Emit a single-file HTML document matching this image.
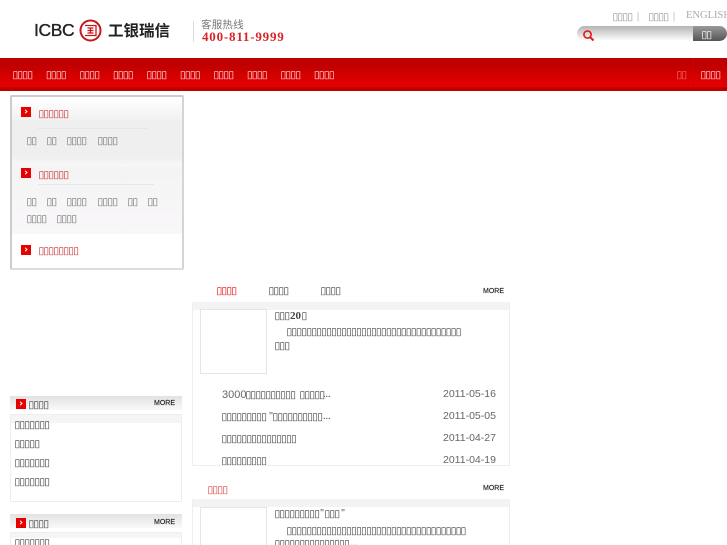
<!DOCTYPE html>
<html lang="zh"><head><meta charset="utf-8"><title>ICBC</title>
<style>
html,body{margin:0;padding:0;background:#fff;width:727px;height:545px;overflow:hidden}
#w{position:absolute;left:0;top:0;width:727px;height:545px;overflow:hidden;font-family:"Liberation Serif",serif;font-size:12px;color:#333}
.t{position:absolute;white-space:nowrap;line-height:14px;font-family:"Liberation Serif",serif;font-size:10px}
.b{position:absolute;white-space:nowrap;line-height:14px;margin-left:-.7px;font-family:"DejaVu Sans",sans-serif;font-size:10.5px;letter-spacing:-.8px;color:#444}
.nav{color:#fdd;top:68px}
.sub{color:#777}
.red{color:#c33}
.more{font:7px/10px "Liberation Sans",sans-serif;color:#222;position:absolute;-webkit-text-stroke:.15px #222}
.ic{position:absolute;width:10px;height:10px;background:#e60000}
.ic:after{content:"";position:absolute;left:3px;top:3px;width:2px;height:2px;border:solid #fff;border-width:1px 1px 0 0;transform:rotate(45deg)}
.h{position:absolute;background:linear-gradient(#e2e2e2,#f9f9f9)}
.d{position:absolute;left:443px;font:10.5px/14px "Liberation Sans",sans-serif;color:#666;white-space:nowrap}
</style></head><body><div id="w">
<div class="t" style="left:34px;top:19px;font:400 17.5px/22px 'Liberation Sans',sans-serif;color:#222;letter-spacing:-.4px;-webkit-text-stroke:.35px #222">ICBC</div>
<svg style="position:absolute;left:79px;top:19px" width="23" height="23" viewBox="0 0 23 23" fill="none" stroke="#c8161d"><circle cx="11.5" cy="11.5" r="10" stroke-width="2"/><path d="M6 6.500H17V16.500H6M8.500 9H14.500M8.500 14H14.500M11.500 9V14M8.500 11.500H14.500" stroke-width="1.300"/></svg>
<div class="t" style="left:108px;top:20px;font:700 15.500px/20px 'Noto Sans CJK SC',sans-serif;color:#222">工银瑞信</div>
<div style="position:absolute;left:193px;top:21px;width:1px;height:21px;background:#ddd"></div>
<div class="t" style="left:201px;top:18px;font:10.500px/14px 'Noto Sans CJK SC',sans-serif;color:#777;letter-spacing:.2px">客服热线</div>
<div class="t" style="left:202px;top:30px;font:700 13px/14px 'Liberation Serif',serif;color:#d8232a;letter-spacing:.8px">400-811-9999</div>

<div class="b" style="left:613px;top:10px;color:#999">▯▯▯▯</div><div class="t" style="left:637px;top:10px;color:#999">|</div>
<div class="b" style="left:649px;top:10px;color:#999">▯▯▯▯</div><div class="t" style="left:673px;top:10px;color:#999">|</div>
<div class="t" style="left:686px;top:9px;font-size:10.500px;color:#aaa">ENGLISH</div>
<div style="position:absolute;left:577px;top:26px;width:120px;height:15px;border-radius:8px 0 0 8px;background:linear-gradient(#b4b4b4,#fff)"></div>
<svg style="position:absolute;left:582px;top:29px" width="13" height="13" viewBox="0 0 13 13" fill="none" stroke="#e01b1b"><circle cx="5.500" cy="5.500" r="3.600" stroke-width="1.600"/><path d="M8.200 8.200L11.500 11.500" stroke-width="2"/></svg>
<div style="position:absolute;left:693px;top:26px;width:34px;height:15px;border-radius:0 8px 8px 0;background:linear-gradient(#9a9a9a,#555)"></div>
<div class="b" style="left:702px;top:28px;color:#fff">▯▯</div>

<div style="position:absolute;left:0;top:58px;width:727px;height:33px;background:linear-gradient(#b90000 0,#c00000 20%,#e60000 85%,#e60000 88%,#b80000 90%,#c40000 100%)"></div>
<div class="b nav" style="left:13px">▯▯▯▯</div>
<div class="b nav" style="left:46.500px">▯▯▯▯</div>
<div class="b nav" style="left:80px">▯▯▯▯</div>
<div class="b nav" style="left:113.500px">▯▯▯▯</div>
<div class="b nav" style="left:147px">▯▯▯▯</div>
<div class="b nav" style="left:180.500px">▯▯▯▯</div>
<div class="b nav" style="left:214px">▯▯▯▯</div>
<div class="b nav" style="left:247.500px">▯▯▯▯</div>
<div class="b nav" style="left:281px">▯▯▯▯</div>
<div class="b nav" style="left:314.500px">▯▯▯▯</div>
<div class="b nav" style="left:677px;color:#ff6a6a">▯▯</div>
<div style="position:absolute;left:693px;top:58px;width:1px;height:30px;background:#d40000"></div>
<div class="b nav" style="left:701px">▯▯▯▯</div>

<!-- left menu -->
<div style="position:absolute;left:10px;top:95px;width:170px;height:171px;border:2px solid #ccc;border-bottom-color:#ddd;border-right-color:#d5d5d5;background:#fff;border-radius:2px"></div>
<div style="position:absolute;left:12px;top:97px;width:170px;height:23px;background:linear-gradient(#fff,#f2f2f2)"></div>
<div style="position:absolute;left:12px;top:120px;width:170px;height:36px;background:#efefef"></div>
<div style="position:absolute;left:12px;top:156px;width:170px;height:10px;background:linear-gradient(#efefef,#f7f7f7)"></div>
<div style="position:absolute;left:12px;top:166px;width:170px;height:68px;background:linear-gradient(#f4f4f4,#f9f7f9)"></div>
<div style="position:absolute;left:38px;top:128px;width:110px;height:1px;background:#e6e6e6"></div>
<div style="position:absolute;left:38px;top:184px;width:116px;height:1px;background:#e6e6e6"></div>
<div class="ic" style="left:21px;top:107px"></div>
<div class="b red" style="left:39px;top:107px">▯▯▯▯▯▯</div>
<div class="b sub" style="left:27px;top:134px">▯▯</div>
<div class="b sub" style="left:47px;top:134px">▯▯</div>
<div class="b sub" style="left:67px;top:134px">▯▯▯▯</div>
<div class="b sub" style="left:98px;top:134px">▯▯▯▯</div>
<div class="ic" style="left:21px;top:168px"></div>
<div class="b red" style="left:39px;top:168px">▯▯▯▯▯▯</div>
<div class="b sub" style="left:27px;top:195px">▯▯</div>
<div class="b sub" style="left:47px;top:195px">▯▯</div>
<div class="b sub" style="left:67px;top:195px">▯▯▯▯</div>
<div class="b sub" style="left:98px;top:195px">▯▯▯▯</div>
<div class="b sub" style="left:128px;top:195px">▯▯</div>
<div class="b sub" style="left:148px;top:195px">▯▯</div>
<div class="b sub" style="left:27px;top:212px">▯▯▯▯</div>
<div class="b sub" style="left:57px;top:212px">▯▯▯▯</div>
<div class="ic" style="left:21px;top:245px"></div>
<div class="b red" style="left:39px;top:244px">▯▯▯▯▯▯▯▯</div>

<!-- left section 1 -->
<div class="h" style="left:10px;top:396px;width:172px;height:14px"></div>
<div class="ic" style="left:16px;top:399px"></div>
<div class="b" style="left:29px;top:398px">▯▯▯▯</div>
<div class="more" style="left:154px;top:399px">MORE</div>
<div style="position:absolute;left:10px;top:414px;width:170px;height:86px;border:1px solid #eee;background:linear-gradient(#f5f5f5 0,#f5f5f5 8px,#fff 8px)"></div>
<div class="b" style="left:15px;top:418px">▯▯▯▯▯▯▯</div>
<div class="b" style="left:15px;top:437px">▯▯▯▯▯</div>
<div class="b" style="left:15px;top:456px">▯▯▯▯▯▯▯</div>
<div class="b" style="left:15px;top:475px">▯▯▯▯▯▯▯</div>

<!-- left section 2 -->
<div class="h" style="left:10px;top:514px;width:172px;height:14px"></div>
<div class="ic" style="left:16px;top:518px"></div>
<div class="b" style="left:29px;top:517px">▯▯▯▯</div>
<div class="more" style="left:154px;top:518px">MORE</div>
<div style="position:absolute;left:10px;top:532px;width:170px;height:20px;border:1px solid #eee;background:linear-gradient(#f5f5f5 0,#f5f5f5 5px,#fff 5px)"></div>
<div class="b" style="left:15px;top:536px">▯▯▯▯▯▯▯</div>

<!-- center 1 -->
<div class="b" style="left:217px;top:284px;color:#e00">▯▯▯▯</div>
<div class="b" style="left:269px;top:284px">▯▯▯▯</div>
<div class="b" style="left:321px;top:284px">▯▯▯▯</div>
<div class="more" style="left:483px;top:287px">MORE</div>
<div style="position:absolute;left:192px;top:302px;width:316px;height:163px;border:1px solid #eee;border-top:0;background:linear-gradient(#f3f3f3 0,#f3f3f3 8px,#fff 8px);overflow:hidden">
<div style="position:absolute;left:7px;top:7px;width:65px;height:63px;border:1px solid #e5e5e5;background:#fff"></div>
<div class="b" style="left:82px;top:7px">▯▯▯</div><div class="t" style="left:97px;top:7px;font:700 11px/14px 'Liberation Serif',serif;color:#444">20</div><div class="b" style="left:109px;top:7px">▯</div>
<div class="b" style="left:94px;top:23px">▯▯▯▯▯▯▯▯▯▯▯▯▯▯▯▯▯▯▯▯▯▯▯▯▯▯▯▯▯▯▯▯▯▯▯</div>
<div class="b" style="left:82px;top:37px">▯▯▯</div>
<div class="t" style="left:29px;top:86px;font:11px/14px 'Liberation Sans',sans-serif;color:#666">3000</div><div class="b" style="left:53px;top:86px">▯▯▯▯▯▯▯▯▯▯</div><div class="b" style="left:107px;top:86px">▯▯▯▯▯</div><div class="t" style="left:130px;top:86px;color:#444">...</div>
<div class="b" style="left:29px;top:108px">▯▯▯▯▯▯▯▯▯</div><div class="t" style="left:76px;top:108px;color:#444">"</div><div class="b" style="left:80px;top:108px">▯▯▯▯▯▯▯▯▯▯</div><div class="t" style="left:130px;top:108px;color:#444">...</div>
<div class="b" style="left:29px;top:130px">▯▯▯▯▯▯▯▯▯▯▯▯▯▯▯</div>
<div class="b" style="left:29px;top:152px">▯▯▯▯▯▯▯▯▯</div>
</div>
<div class="d" style="top:387px">2011-05-16</div>
<div class="d" style="top:409px">2011-05-05</div>
<div class="d" style="top:431px">2011-04-27</div>
<div class="d" style="top:453px">2011-04-19</div>

<!-- center 2 -->
<div class="b" style="left:208px;top:483px;color:#d44">▯▯▯▯</div>
<div class="more" style="left:483px;top:484px">MORE</div>
<div style="position:absolute;left:192px;top:499px;width:316px;height:60px;border:1px solid #eee;border-top:0;background:linear-gradient(#f3f3f3 0,#f3f3f3 8px,#fff 8px)"></div>
<div style="position:absolute;left:200px;top:507px;width:65px;height:60px;border:1px solid #e5e5e5;background:#fff"></div>
<div class="b" style="left:275px;top:507px">▯▯▯▯▯▯▯▯▯</div><div class="t" style="left:320px;top:507px;color:#444">"</div><div class="b" style="left:325px;top:507px">▯▯▯</div><div class="t" style="left:341px;top:507px;color:#444">"</div>
<div class="b" style="left:287px;top:524px">▯▯▯▯▯▯▯▯▯▯▯▯▯▯▯▯▯▯▯▯▯▯▯▯▯▯▯▯▯▯▯▯▯▯▯▯</div>
<div class="b" style="left:275px;top:537px">▯▯▯▯▯▯▯▯▯▯▯▯▯▯▯</div><div class="t" style="left:350px;top:537px;color:#444">...</div>
</div></body></html>
